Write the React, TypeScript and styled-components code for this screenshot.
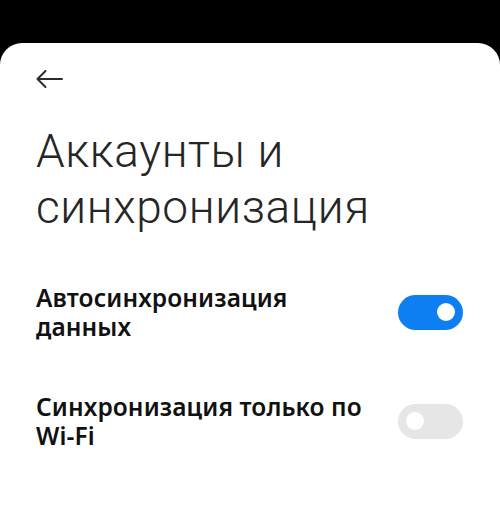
import styled, { createGlobalStyle } from "styled-components";
import { useState } from "react";

const Global = createGlobalStyle`
    html, body {
        margin: 0;
        padding: 0;
        background: #000;
    }
    body {
        font-family: Roboto, "Noto Sans", "Liberation Sans", sans-serif;
        -webkit-font-smoothing: antialiased;
    }
`;

const Screen = styled.div`
    width: 500px;
    height: 506px;
    background: #000;
    padding-top: 43px;
    box-sizing: border-box;
    overflow: hidden;
`;

const Sheet = styled.div`
    height: 100%;
    background: #fff;
    border-radius: 22px 22px 0 0;
    padding: 0 36px;
    box-sizing: border-box;
`;

const TopBar = styled.div`
    height: 72px;
    display: flex;
    align-items: center;
`;

const BackButton = styled.button`
    width: 28px;
    height: 28px;
    margin-left: -1px;
    padding: 0;
    border: none;
    background: none;
    display: flex;
    align-items: center;
    justify-content: center;
    cursor: pointer;
    color: #2b2b2b;
`;

const Title = styled.h1`
    margin: 8px 0 48px;
    font-size: 46px;
    font-weight: 300;
    line-height: 56px;
    letter-spacing: 0.6px;
    color: #262626;
`;

const List = styled.div`
    display: flex;
    flex-direction: column;
    gap: 51px;
`;

const Row = styled.div`
    display: flex;
    align-items: center;
    justify-content: space-between;
`;

const Label = styled.div`
    width: 340px;
    font-family: "Noto Sans", Roboto, sans-serif;
    font-size: 24.5px;
    font-weight: 600;
    line-height: 29px;
    letter-spacing: 0.1px;
    color: #111;
`;

const Track = styled.button<{ $on?: boolean }>`
    position: relative;
    width: 65px;
    height: 35px;
    margin-right: 1px;
    padding: 0;
    border: none;
    border-radius: 18px;
    background: ${(p) => (p.$on ? "#0d7ff2" : "#e6e6e6")};
    cursor: pointer;
    flex-shrink: 0;
`;

const Knob = styled.span<{ $on?: boolean }>`
    position: absolute;
    top: 8px;
    left: ${(p) => (p.$on ? "39px" : "8px")};
    width: 18px;
    height: 18px;
    border-radius: 50%;
    background: #fff;
`;

function Toggle({ on, onClick }: { on: boolean; onClick: () => void }) {
    return (
        <Track $on={on} onClick={onClick}>
            <Knob $on={on} />
        </Track>
    );
}

export default function App() {
    const [autoSync, setAutoSync] = useState(true);
    const [wifiOnly, setWifiOnly] = useState(false);

    return (
        <>
            <Global />
            <Screen>
                <Sheet>
                    <TopBar>
                        <BackButton aria-label="Назад">
                            <svg width="28" height="20" viewBox="0 0 28 20" fill="none">
                                <path
                                    d="M27 10H3M10.5 2L2.5 10l8 8"
                                    stroke="currentColor"
                                    strokeWidth="2"
                                    strokeLinecap="round"
                                    strokeLinejoin="round"
                                />
                            </svg>
                        </BackButton>
                    </TopBar>

                    <Title>Аккаунты и синхронизация</Title>

                    <List>
                        <Row>
                            <Label>Автосинхронизация данных</Label>
                            <Toggle on={autoSync} onClick={() => setAutoSync(!autoSync)} />
                        </Row>
                        <Row>
                            <Label>Синхронизация только по Wi-Fi</Label>
                            <Toggle on={wifiOnly} onClick={() => setWifiOnly(!wifiOnly)} />
                        </Row>
                    </List>
                </Sheet>
            </Screen>
        </>
    );
}
